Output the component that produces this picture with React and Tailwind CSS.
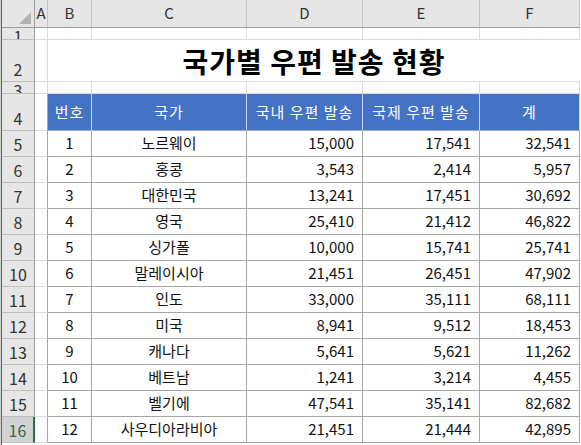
import React from "react";

const rows = [
  [1, "노르웨이", "15,000", "17,541", "32,541"],
  [2, "홍콩", "3,543", "2,414", "5,957"],
  [3, "대한민국", "13,241", "17,451", "30,692"],
  [4, "영국", "25,410", "21,412", "46,822"],
  [5, "싱가폴", "10,000", "15,741", "25,741"],
  [6, "말레이시아", "21,451", "26,451", "47,902"],
  [7, "인도", "33,000", "35,111", "68,111"],
  [8, "미국", "8,941", "9,512", "18,453"],
  [9, "캐나다", "5,641", "5,621", "11,262"],
  [10, "베트남", "1,241", "3,214", "4,455"],
  [11, "벨기에", "47,541", "35,141", "82,682"],
  [12, "사우디아라비아", "21,451", "21,444", "42,895"],
];

const font = { fontFamily: '"Noto Sans CJK KR", "Noto Sans", sans-serif' };

// row header cell (left grey column)
const RowHead = ({ children, selected, short }) => (
  <div
    className={
      "flex justify-center overflow-hidden border-b border-[#bebebe] text-[16px] leading-[18px] " +
      (short ? "items-start " : "items-end ") +
      (selected
        ? "bg-[#d2d2d2] text-[#2b6b45] border-r-2 border-r-[#217346]"
        : "bg-[#e6e6e6] text-[#333] border-r border-r-[#9e9e9e]")
    }
  >
    <span className={short ? "leading-[16px]" : "pb-[3px]"}>{children}</span>
  </div>
);

const ColHead = ({ children }) => (
  <div className="flex items-center justify-center bg-[#e6e6e6] border-r border-r-[#c6c6c6] border-b border-b-[#9e9e9e] text-[15px] text-[#333]">
    {children}
  </div>
);

const Blank = () => <div className="border-r border-b border-[#dadada] bg-white" />;

const Cell = ({ children, align = "center" }) => (
  <div
    className={
      "flex items-center bg-white border-b border-r border-[#a6a6a6] text-[15px] text-[#111] " +
      (align === "right" ? "justify-end pr-[8px]" : "justify-center")
    }
  >
    {children}
  </div>
);

const Head = ({ children }) => (
  <div className="flex items-center justify-center bg-[#4472c4] text-white text-[15px] tracking-[1px] border-r border-r-[#c9d3e6] border-b border-b-[#a6a6a6]">
    {children}
  </div>
);

export default function App() {
  return (
    <div className="w-[581px] h-[445px] bg-white overflow-hidden flex" style={font}>
      <div className="w-[1px] bg-[#c8d4cb]" />
      <div className="w-[1px] bg-[#51705a]" />
      <div className="grid grid-cols-[33px_13px_44px_155px_116px_117px_100px] grid-rows-[28px_12px_42px_12px_37px_repeat(12,26px)]">
        {/* column header row */}
        <div className="bg-[#e6e6e6] border-r border-r-[#9e9e9e] border-b border-b-[#9e9e9e] flex items-end justify-end p-[3px]">
          <svg width="12" height="12" viewBox="0 0 12 12">
            <polygon points="12,0 12,12 0,12" fill="#b4b4b4" />
          </svg>
        </div>
        <ColHead>A</ColHead>
        <ColHead>B</ColHead>
        <ColHead>C</ColHead>
        <ColHead>D</ColHead>
        <ColHead>E</ColHead>
        <ColHead>F</ColHead>

        {/* row 1 */}
        <RowHead short>1</RowHead>
        <Blank />
        <Blank />
        <Blank />
        <Blank />
        <Blank />
        <Blank />

        {/* row 2 - title */}
        <RowHead>2</RowHead>
        <Blank />
        <div className="col-span-5 flex items-center justify-center border-b border-[#dadada] bg-white">
          <span className="text-[28px] font-bold text-black tracking-[1px] leading-none">
            국가별 우편 발송 현황
          </span>
        </div>

        {/* row 3 */}
        <RowHead short>3</RowHead>
        <Blank />
        <Blank />
        <Blank />
        <Blank />
        <Blank />
        <Blank />

        {/* row 4 - table header */}
        <RowHead>4</RowHead>
        <div className="border-r border-r-[#a6a6a6] border-b border-b-[#dadada] bg-white" />
        <Head>번호</Head>
        <Head>국가</Head>
        <Head>국내 우편 발송</Head>
        <Head>국제 우편 발송</Head>
        <Head>계</Head>

        {rows.map((r, i) => (
          <React.Fragment key={r[0]}>
            <RowHead selected={i === rows.length - 1}>{i + 5}</RowHead>
            <div className="border-r border-r-[#a6a6a6] border-b border-b-[#dadada] bg-white" />
            <Cell>{r[0]}</Cell>
            <Cell>{r[1]}</Cell>
            <Cell align="right">{r[2]}</Cell>
            <Cell align="right">{r[3]}</Cell>
            <Cell align="right">{r[4]}</Cell>
          </React.Fragment>
        ))}
      </div>
    </div>
  );
}
